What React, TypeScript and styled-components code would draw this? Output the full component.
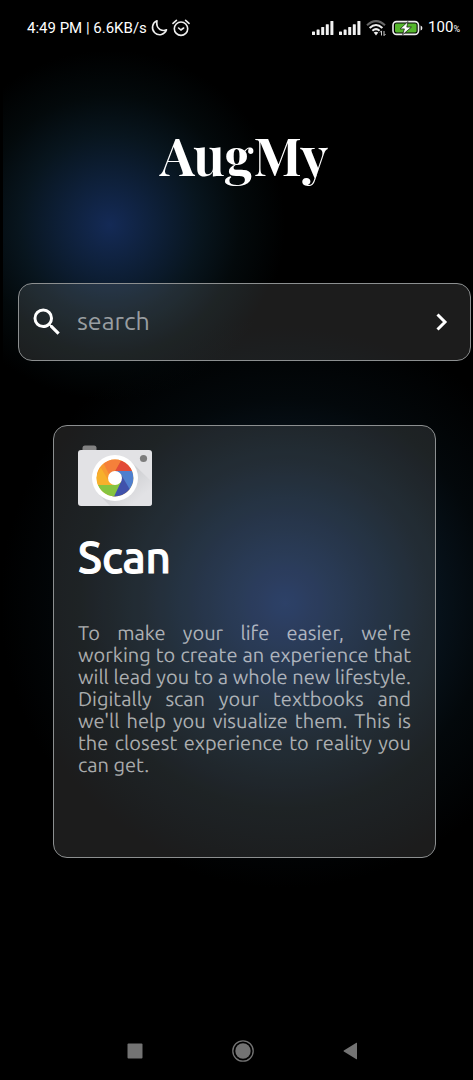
import React from "react";
import styled, { createGlobalStyle } from "styled-components";

const GlobalStyle = createGlobalStyle`
  * { box-sizing: border-box; }
  body { margin: 0; background: #000; color: #fff; }
`;

const uiFont = `"Ubuntu", "Noto Sans", sans-serif`;

const Screen = styled.div`
  min-height: 100vh;
  display: flex;
  flex-direction: column;
  padding-left: 3px;
  font-family: ${uiFont};
  background:
    radial-gradient(circle 175px at 107px 225px, #142a56 0, #0e203a 45px, #08151e 90px, #03090b 130px, transparent 100%) content-box no-repeat,
    radial-gradient(circle 285px at 282px 603px, #142a56 0, #0e203a 70px, #08141e 140px, #03080b 205px, transparent 100%) content-box no-repeat,
    #000;
`;

const StatusBar = styled.header`
  height: 56px;
  display: flex;
  align-items: center;
  justify-content: space-between;
  padding: 0 13px 0 24px;
  font: 15px/20px Roboto, sans-serif;
`;

const StatusGroup = styled.div<{ $gap: number }>`
  display: flex;
  align-items: center;
  gap: ${(p) => p.$gap}px;
`;

const Percent = styled.small`
  font-size: 9px;
`;

const Main = styled.main`
  flex: 1;
`;

const Title = styled.h1`
  margin: 68px 0 97px;
  padding-left: 12px;
  text-align: center;
  font: 700 52px/62px "Playfair Display", "Liberation Serif", serif;
`;

const SearchBar = styled.form`
  height: 78px;
  margin: 0 2px 64px 15px;
  padding: 0 16px 0 10px;
  display: flex;
  align-items: center;
  gap: 12px;
  border: 1px solid #8c8f90;
  border-radius: 14px;
  background: rgba(255, 255, 255, 0.11);
`;

const SearchInput = styled.input`
  flex: 1;
  min-width: 0;
  padding: 0 0 2px;
  border: 0;
  outline: 0;
  background: none;
  color: #fff;
  font: 25px/32px ${uiFont};
  &::placeholder { color: #999ea1; opacity: 1; }
`;

const IconButton = styled.button`
  display: flex;
  padding: 0;
  border: 0;
  background: none;
  color: inherit;
`;

const Card = styled.article`
  min-height: 433px;
  margin: 0 37px 0 50px;
  padding: 19px 24px;
  border: 1px solid #8c8f90;
  border-radius: 14px;
  background: rgba(255, 255, 255, 0.11);
`;

const CardIcon = styled.svg`
  display: block;
`;

const CardTitle = styled.h2`
  margin: 20px 0 35px;
  font-size: 44px;
  line-height: 60px;
  font-weight: 500;
  -webkit-text-stroke: 1px currentColor;
`;

const CardText = styled.p`
  margin: 0;
  color: rgba(255, 255, 255, 0.64);
  font-size: 20px;
  line-height: 22px;
  text-align: justify;
  text-rendering: geometricPrecision;
`;

const NavBar = styled.nav`
  height: 58px;
  display: flex;
  justify-content: center;
  padding-left: 10px;
`;

const NavButton = styled(IconButton)`
  width: 108px;
  align-items: center;
  justify-content: center;
  color: #737373;
`;

const Moon = () => (
  <svg width="17" height="18" viewBox="0 0 17 18" fill="none" stroke="#eee" strokeWidth="1.6" strokeLinejoin="round" aria-hidden="true">
    <path d="M6 1.8A7.2 7.2 0 1 0 15.500 10.800Q12.500 12.300 9 10.500Q4.800 7.500 6 1.800Z" />
  </svg>
);

const Alarm = () => (
  <svg width="18" height="18" viewBox="0 0 18 18" fill="none" stroke="#eee" strokeWidth="1.6" strokeLinecap="round" aria-hidden="true">
    <circle cx="9" cy="9.7" r="6.7" />
    <path d="M1 4.4L4.4 1.4M17 4.4L13.6 1.4M6.6 9L9 11L11.6 9" />
  </svg>
);

const Signal = () => (
  <svg width="22" height="14" viewBox="0 0 22 14" fill="#f2f2f2" aria-hidden="true">
    <rect x="0" y="10.5" width="3" height="3.5" rx=".6" />
    <rect x="4.6" y="8.5" width="3" height="5.5" rx=".6" />
    <rect x="9.2" y="6" width="3" height="8" rx=".6" />
    <rect x="13.8" y="3.2" width="3" height="10.8" rx=".6" />
    <rect x="18.4" y="0" width="3" height="14" rx=".6" />
  </svg>
);

const Wifi = () => (
  <svg width="21" height="16" viewBox="0 0 21 16" fill="none" strokeWidth="2" aria-hidden="true">
    <path d="M1 5.2Q10 -3 19 5.2" stroke="#666" />
    <path d="M3.6 8Q10 2 16.4 8" stroke="#eee" />
    <path d="M6.4 10.8Q10 7.4 13.6 10.8" stroke="#eee" />
    <path d="M10 15.4L7.7 12.6Q10 11 12.3 12.6Z" fill="#eee" />
    <path d="M15.5 15.5V11M14 12.5L15.5 10.8M18 11V15.5M19.5 14L18 15.7" stroke="#ccc" strokeWidth="1" />
  </svg>
);

const Battery = () => (
  <svg width="31" height="16" viewBox="0 0 31 16" aria-hidden="true">
    <rect x="1" y="1.6" width="25.5" height="12.8" rx="3.6" fill="none" stroke="#eee" strokeWidth="1.6" />
    <rect x="3" y="3.600" width="21.6" height="8.800" rx="1.4" fill="#55b62c" />
    <path d="M28.6 5.5Q30.4 6 30.4 8T28.6 10.5Z" fill="#eee" />
    <path d="M16 1.500L8.2 8.9H12.4L10.600 14.800L19.400 7.100H14.800Z" fill="#fff" stroke="#111" strokeWidth=".7" />
  </svg>
);

const Camera = () => (
  <CardIcon width="76" height="62" viewBox="0 0 76 62" aria-hidden="true">
    <defs>
      <linearGradient id="lensShade" x1="0" y1="0" x2="1" y2="1">
        <stop offset=".45" stopColor="#c8c9cc" />
        <stop offset=".8" stopColor="#e2e2e5" />
      </linearGradient>
      <clipPath id="lens"><circle cx="37" cy="33" r="18.4" /></clipPath>
      <clipPath id="cameraBody"><rect x="0" y="5" width="74" height="56" rx="3" /></clipPath>
    </defs>
    <path d="M4.500 6V3Q4.500 .5 7 .5H16Q18.500 .5 18.500 3V6Z" fill="#828282" />
    <rect x="0" y="5" width="74" height="56" rx="3" fill="#e2e2e5" />
    <g clipPath="url(#cameraBody)">
      <path d="M53.300 16.700L74 37V61H32L20.700 49.300Z" fill="url(#lensShade)" opacity=".7" />
    </g>
    <circle cx="65.500" cy="13.500" r="3.600" fill="#7d7d7d" />
    <circle cx="37" cy="33" r="23" fill="#fff" />
    <g clipPath="url(#lens)">
      <rect x="18" y="14" width="38" height="38" fill="#f7b02c" />
      <path d="M30.900 29.500L21.300 12.900H44.300L37 26Z" fill="#f5803a" />
      <path d="M18 21L24 15L30.900 29.500V36L18 30Z" fill="#f79a31" />
      <path d="M37 26L46 10L60 20V26Z" fill="#e24b38" />
      <path d="M37 26H60V46H51.500L43.100 29.500Z" fill="#4f7fce" />
      <path d="M43.100 29.500L54.500 49L36 56L33 53.500L43.100 36.500Z" fill="#4052ab" />
      <path d="M37 40H16L20 54H34.900L43.100 36.500Z" fill="#86c440" />
      <path d="M30.900 36.500L22.800 22.500L14 40H37Z" fill="#f7b02c" />
    </g>
    <circle cx="37" cy="33" r="7" fill="#fff" />
  </CardIcon>
);

export default function App() {
  return (
    <>
      <GlobalStyle />
      <Screen>
        <StatusBar>
          <StatusGroup $gap={4}>
            <span>4:49 PM | 6.6KB/s</span>
            <Moon />
            <Alarm />
          </StatusGroup>
          <StatusGroup $gap={5}>
            <Signal />
            <Signal />
            <Wifi />
            <Battery />
            <span>100<Percent>%</Percent></span>
          </StatusGroup>
        </StatusBar>
        <Main>
          <Title>AugMy</Title>
          <SearchBar role="search" onSubmit={(e) => e.preventDefault()}>
            <svg width="36" height="36" viewBox="0 0 24 24" fill="#fff" aria-hidden="true">
              <path d="M15.500 14h-.79l-.28-.27A6.471 6.471 0 0 0 16 9.500 6.500 6.500 0 1 0 9.500 16c1.610 0 3.090-.59 4.230-1.570l.27.28v.79l5 4.990L20.490 19l-4.990-5zm-6 0C7.010 14 5 11.990 5 9.500S7.010 5 9.500 5 14 7.010 14 9.500 11.990 14 9.500 14z" />
            </svg>
            <SearchInput type="text" placeholder="search" aria-label="search" />
            <IconButton type="submit" aria-label="Go">
              <svg width="24" height="24" viewBox="0 0 24 24" fill="none" stroke="#fff" strokeWidth="3" aria-hidden="true">
                <path d="M7.500 4.500L15 12L7.500 19.500" />
              </svg>
            </IconButton>
          </SearchBar>
          <Card>
            <Camera />
            <CardTitle>Scan</CardTitle>
            <CardText>
              To make your life easier, we're working to create an experience that will lead you to a whole new
              lifestyle. Digitally scan your textbooks and we'll help you visualize them. This is the closest
              experience to reality you can get.
            </CardText>
          </Card>
        </Main>
        <NavBar>
          <NavButton type="button" aria-label="Recent apps">
            <svg width="16" height="16" viewBox="0 0 16 16" fill="currentColor"><rect x=".5" y=".5" width="15" height="15" rx="1" /></svg>
          </NavButton>
          <NavButton type="button" aria-label="Home">
            <svg width="22" height="22" viewBox="0 0 22 22" fill="currentColor">
              <circle cx="11" cy="11" r="7.700" />
              <circle cx="11" cy="11" r="10.200" fill="none" stroke="currentColor" strokeWidth="1.300" />
            </svg>
          </NavButton>
          <NavButton type="button" aria-label="Back">
            <svg width="16" height="18" viewBox="0 0 16 18" fill="currentColor"><path d="M14 1V17Q14 17.500 13.400 17.200L.8 9.500Q.2 9 .8 8.500L13.400 .8Q14 .5 14 1Z" /></svg>
          </NavButton>
        </NavBar>
      </Screen>
    </>
  );
}
